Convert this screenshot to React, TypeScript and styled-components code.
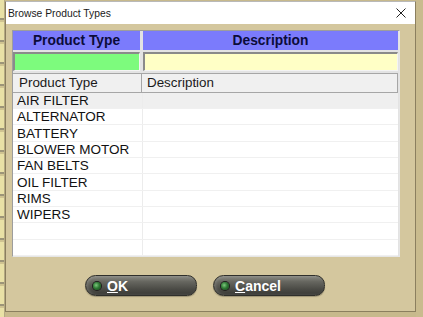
import styled, { createGlobalStyle } from 'styled-components'

const GlobalStyle = createGlobalStyle`
  html, body {
    margin: 0;
    padding: 0;
    background: #c7b98c;
  }
`

const Desktop = styled.div`
  width: 423px;
  height: 317px;
  display: flex;
  align-items: flex-start;
  overflow: hidden;
  background: #c7b98c;
  font-family: 'Liberation Sans', Arial, sans-serif;
`

const LeftStrip = styled.div`
  width: 5px;
  height: 317px;
  flex-shrink: 0;
  background:
    repeating-linear-gradient(
      to bottom,
      #e9e1a6 0px,
      #e9e1a6 18px,
      #9c9478 18px,
      #9c9478 20px,
      #cfc391 20px,
      #cfc391 22px
    );
  border-right: 1px solid #b4a983;
  box-sizing: border-box;
`

const Dialog = styled.div`
  width: 411px;
  height: 311px;
  flex-shrink: 0;
  display: flex;
  flex-direction: column;
  border: 1px solid #8b7f5f;
  border-top: 1px solid #b9b9b9;
  box-sizing: border-box;
  background: #d4c79e;
  margin-top: 1px;
`

const TitleBar = styled.div`
  height: 22px;
  background: #ffffff;
  display: flex;
  align-items: center;
  justify-content: space-between;
  padding: 0 8px 0 2px;
  font-family: 'Liberation Sans', Arial, sans-serif;
  font-size: 10.3px;
  color: #1a1a1a;
`

const CloseButton = styled.div`
  width: 12px;
  height: 12px;
  display: flex;
  align-items: center;
  justify-content: center;
`

const Body = styled.div`
  flex: 1;
  display: flex;
  flex-direction: column;
  padding: 6px 0 0 6px;
`

const Grid = styled.div`
  width: 388px;
  height: 227px;
  box-sizing: border-box;
  border: 1px solid #9d9d9d;
  border-bottom-color: #e6e6e6;
  border-right-color: #e6e6e6;
  background: #e3e3e3;
  display: flex;
  flex-direction: column;
`

const TopRow = styled.div<{ h: number; mb: number }>`
  display: grid;
  grid-template-columns: 127px 255px;
  column-gap: 3px;
  height: ${({ h }) => h}px;
  margin-bottom: ${({ mb }) => mb}px;
`

const HeadCell = styled.div`
  background: #7b7bfc;
  color: #0c0c3a;
  font-weight: bold;
  font-size: 13.8px;
  display: flex;
  align-items: center;
  justify-content: center;
`

const FilterCell = styled.div<{ bg: string }>`
  background: ${({ bg }) => bg};
  box-sizing: border-box;
  border-top: 2px solid #8a8a8a;
  border-left: 2px solid #8a8a8a;
  border-bottom: 1px solid #f4f4f4;
  border-right: 1px solid #f4f4f4;
`

const List = styled.div`
  flex: 1;
  background: #ffffff;
  margin-right: 1px;
  display: flex;
  flex-direction: column;
  overflow: hidden;
`

const ListHeader = styled.div`
  height: 20px;
  display: grid;
  grid-template-columns: 129px 1fr;
  background: #f0f0f0;
  border: 1px solid #a6a6a6;
  border-left: none;
  box-sizing: border-box;
`

const ListHeadCell = styled.div<{ divider?: boolean }>`
  display: flex;
  align-items: center;
  padding-left: ${({ divider }) => (divider ? '6px' : '5px')};
  font-size: 13.4px;
  color: #1a1a1a;
  border-right: ${({ divider }) => (divider ? '1px solid #a6a6a6' : 'none')};
`

const Row = styled.div<{ selected?: boolean }>`
  height: 16.5px;
  display: grid;
  grid-template-columns: 130px 1fr;
  background: ${({ selected }) => (selected ? '#efefef' : '#ffffff')};
  border-bottom: 1px solid #f0f0f0;
  box-sizing: border-box;
`

const Cell = styled.div<{ first?: boolean }>`
  display: flex;
  align-items: center;
  padding-left: 4px;
  font-size: 13.5px;
  color: #111111;
  white-space: nowrap;
  border-right: ${({ first }) => (first ? '1px solid #ececec' : 'none')};
`

const ButtonRow = styled.div`
  display: flex;
  gap: 16px;
  padding-left: 73px;
  margin-top: 18px;
`

const Button = styled.div`
  width: 112px;
  height: 21px;
  box-sizing: border-box;
  border-radius: 11px 10px 10px 11px;
  border: 1px solid #2f2f2b;
  background: linear-gradient(to bottom, #8a8a84 0%, #66665f 30%, #4a4a45 70%, #3a3a36 100%);
  box-shadow: inset 2px 0 3px rgba(255, 255, 255, 0.15), 0 1px 1px rgba(0, 0, 0, 0.25);
  display: flex;
  align-items: center;
  padding-left: 7px;
  gap: 6px;
  color: #ffffff;
  font-weight: bold;
  font-size: 14px;
`

const Led = styled.span`
  width: 8px;
  height: 8px;
  border-radius: 50%;
  background: radial-gradient(circle at 40% 40%, #7fc77f 0%, #2e7a34 45%, #17401a 100%);
  box-shadow: 0 0 0 1px #1e1e1c;
`

const Label = styled.span`
  u {
    text-decoration-thickness: 1px;
  }
`

const RightStrip = styled.div`
  flex: 1;
  height: 317px;
  background: #c9bb8e;
`

const items = ['AIR FILTER', 'ALTERNATOR', 'BATTERY', 'BLOWER MOTOR', 'FAN BELTS', 'OIL FILTER', 'RIMS', 'WIPERS', '', '']

export default function App() {
  return (
    <>
      <GlobalStyle />
      <Desktop>
        <LeftStrip />
        <Dialog>
          <TitleBar>
            <span>Browse Product Types</span>
            <CloseButton>
              <svg width="10" height="10" viewBox="0 0 10 10">
                <path d="M0.5 0.5 L9.5 9.5 M9.5 0.5 L0.5 9.5" stroke="#222" strokeWidth="1" fill="none" />
              </svg>
            </CloseButton>
          </TitleBar>
          <Body>
            <Grid>
              <TopRow h={19} mb={2}>
                <HeadCell>Product Type</HeadCell>
                <HeadCell>Description</HeadCell>
              </TopRow>
              <TopRow h={19} mb={2}>
                <FilterCell bg="#7dfb7d" />
                <FilterCell bg="#ffffc6" />
              </TopRow>
              <List>
                <ListHeader>
                  <ListHeadCell divider>Product Type</ListHeadCell>
                  <ListHeadCell>Description</ListHeadCell>
                </ListHeader>
                {items.map((name, i) => (
                  <Row key={i} selected={i === 0}>
                    <Cell first>{name}</Cell>
                    <Cell />
                  </Row>
                ))}
              </List>
            </Grid>
            <ButtonRow>
              <Button>
                <Led />
                <Label>
                  <u>O</u>K
                </Label>
              </Button>
              <Button>
                <Led />
                <Label>
                  <u>C</u>ancel
                </Label>
              </Button>
            </ButtonRow>
          </Body>
        </Dialog>
        <RightStrip />
      </Desktop>
    </>
  )
}
